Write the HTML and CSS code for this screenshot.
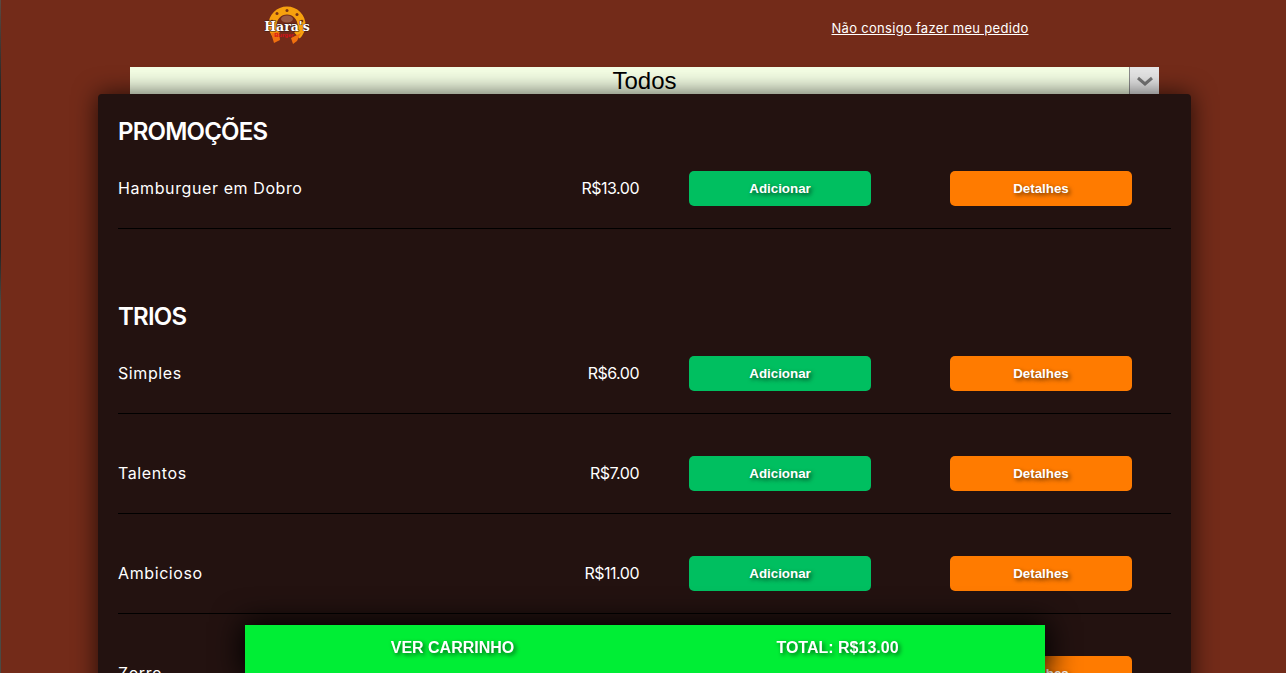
FILE: index.html
```html
<!DOCTYPE html>
<html lang="pt-BR">
<head>
    <meta charset="UTF-8">
    <meta name="viewport" content="width=device-width, initial-scale=1.0">
    <title>Hara's Burger</title>
    <link rel="stylesheet" href="styles.css">
</head>
<body>
    <header class="topo">
        <div class="logo-area">
            <svg class="logo" width="46" height="42" viewBox="0 0 46 42">
                <path d="M13 29.5 A14.5 14.5 0 1 1 33 29.5" fill="none" stroke="#f7a10e" stroke-width="8"/>
                <path d="M7 27 L15 26 L16 34 L10 37 Z M27 32 L37 27 L33 35 L29 38 Z" fill="#f0700f"/>
                <circle cx="23" cy="4.6" r="1.5" fill="#7a3414"/>
                <circle cx="13" cy="7.5" r="1.5" fill="#7a3414"/>
                <circle cx="33" cy="8.5" r="1.5" fill="#7a3414"/>
                <circle cx="8" cy="15" r="1.3" fill="#7a3414"/>
                <circle cx="38" cy="15" r="1.3" fill="#7a3414"/>
                <ellipse cx="23" cy="13" rx="6" ry="3.5" fill="#9a5a44"/>
                <text class="logo-burger" x="20" y="31" text-anchor="middle">Burger</text>
                <text class="logo-nome" x="23" y="25" text-anchor="middle">Hara's</text>
            </svg>
        </div>
        <div class="ajuda-area">
            <a class="ajuda" href="#">Não consigo fazer meu pedido</a>
        </div>
    </header>

    <div class="filtro">
        <span class="filtro-texto">Todos</span>
        <span class="filtro-seta">
            <svg width="18" height="10" viewBox="0 0 18 10"><path d="M2 2 L9 8 L16 2" fill="none" stroke="#777" stroke-width="3"/></svg>
        </span>
    </div>

    <main class="cardapio">
        <section class="grupo">
            <h2>PROMOÇÕES</h2>
            <div class="item">
                <span class="nome">Hamburguer em Dobro</span>
                <span class="preco">R$13.00</span>
                <a class="btn verde" href="#">Adicionar</a>
                <a class="btn laranja" href="#">Detalhes</a>
            </div>
        </section>
        <section class="grupo">
            <h2>TRIOS</h2>
            <div class="item">
                <span class="nome">Simples</span>
                <span class="preco">R$6.00</span>
                <a class="btn verde" href="#">Adicionar</a>
                <a class="btn laranja" href="#">Detalhes</a>
            </div>
            <div class="item">
                <span class="nome">Talentos</span>
                <span class="preco">R$7.00</span>
                <a class="btn verde" href="#">Adicionar</a>
                <a class="btn laranja" href="#">Detalhes</a>
            </div>
            <div class="item">
                <span class="nome">Ambicioso</span>
                <span class="preco">R$11.00</span>
                <a class="btn verde" href="#">Adicionar</a>
                <a class="btn laranja" href="#">Detalhes</a>
            </div>
            <div class="item">
                <span class="nome">Zorro</span>
                <span class="preco">R$12.00</span>
                <a class="btn verde" href="#">Adicionar</a>
                <a class="btn laranja" href="#">Detalhes</a>
            </div>
        </section>
    </main>

    <div class="carrinho">
        <span class="carrinho-lado">VER CARRINHO</span>
        <span class="carrinho-lado">TOTAL: R$13.00</span>
    </div>
</body>
</html>
```

FILE: styles.css
```css
*{
    margin: 0;
    padding: 0;
    box-sizing: border-box;
}
html, body{
    height: 673px;
    overflow: hidden;
}
body{
    background: #732b19;
    font-family: "Inter", "Liberation Sans", sans-serif;
}
/*faixa escura na borda esquerda*/
body::before{
    content: "";
    position: fixed;
    left: 0;
    top: 0;
    bottom: 0;
    width: 1px;
    background: linear-gradient(#5a4a42, #222222 15%, #222222 37%, #4a4a44 45%);
}
.topo{
    display: flex;
    height: 67px;
}
.logo-area{
    width: 574px;
    padding-top: 6px;
    display: flex;
    justify-content: center;
}
.logo-nome{
    font-family: "DejaVu Serif", serif;
    font-weight: bold;
    font-size: 12.5px;
    fill: #ffffff;
    stroke: #3a1a10;
    stroke-width: 1px;
    paint-order: stroke;
}
.logo-burger{
    font-family: "Liberation Sans", sans-serif;
    font-weight: bold;
    font-size: 6px;
    fill: #d81018;
}
.ajuda-area{
    width: 712px;
    padding-top: 20px;
    display: flex;
    justify-content: center;
}
.ajuda{
    color: #ffffff;
    font-size: 13px;
    line-height: 17px;
    letter-spacing: 0.3px;
}
.filtro{
    width: 1029px;
    height: 27px;
    margin-left: 130px;
    display: flex;
    background: #f5ffe5;
}
.filtro-texto{
    flex: 1;
    padding-left: 30px;
    text-align: center;
    font-family: "Liberation Sans", sans-serif;
    font-size: 24px;
    line-height: 27px;
    color: #000000;
}
.filtro-seta{
    width: 30px;
    display: flex;
    align-items: center;
    justify-content: center;
    border-left: 1px solid #8c8c8c;
    background: #e6e6e6;
}
.cardapio{
    width: 1093px;
    margin-left: 98px;
    padding: 0 20px;
    background: #231210;
    border-radius: 4px;
    box-shadow: 0 0 25px rgba(0,0,0,0.7);
    position: relative;
}
.grupo{
    padding-top: 20px;
    padding-bottom: 50px;
}
.grupo h2{
    height: 34px;
    padding-top: 2px;
    font-size: 24px;
    font-weight: 600;
    line-height: 32px;
    color: #ffffff;
    letter-spacing: -0.8px;
}
.item{
    display: flex;
    align-items: center;
    padding: 42px 0 22px;
    border-bottom: 1px solid #000000;
    color: #ffffff;
    font-size: 16px;
}
.grupo h2 + .item{
    padding-top: 23px;
}
.nome{
    width: 421px;
    padding-bottom: 2px;
    letter-spacing: 0.6px;
}
.preco{
    width: 100px;
    padding-bottom: 2px;
    text-align: right;
    margin-right: 50px;
    letter-spacing: -0.5px;
}
.btn{
    width: 182px;
    height: 35px;
    line-height: 35px;
    text-align: center;
    border-radius: 5px;
    color: #ffffff;
    font-family: "Liberation Sans", sans-serif;
    font-size: 13.33px;
    font-weight: bold;
    text-decoration: none;
    text-shadow: 2px 2px 4px rgba(0,0,0,0.6);
}
.verde{
    background: #00bf60;
    margin-right: 79px;
}
.laranja{
    background: #ff7b00;
}
.carrinho{
    position: fixed;
    left: 245px;
    bottom: 0;
    width: 800px;
    height: 48px;
    padding: 0 15px;
    display: flex;
    background: #00ee35;
    box-shadow: 0 0 30px 3px #000000;
}
.carrinho-lado{
    width: 50%;
    text-align: center;
    color: #ffffff;
    font-family: "Liberation Sans", sans-serif;
    font-size: 16px;
    font-weight: bold;
    line-height: 45px;
    text-shadow: 2px 2px 4px rgba(0,0,0,0.6);
}
```
